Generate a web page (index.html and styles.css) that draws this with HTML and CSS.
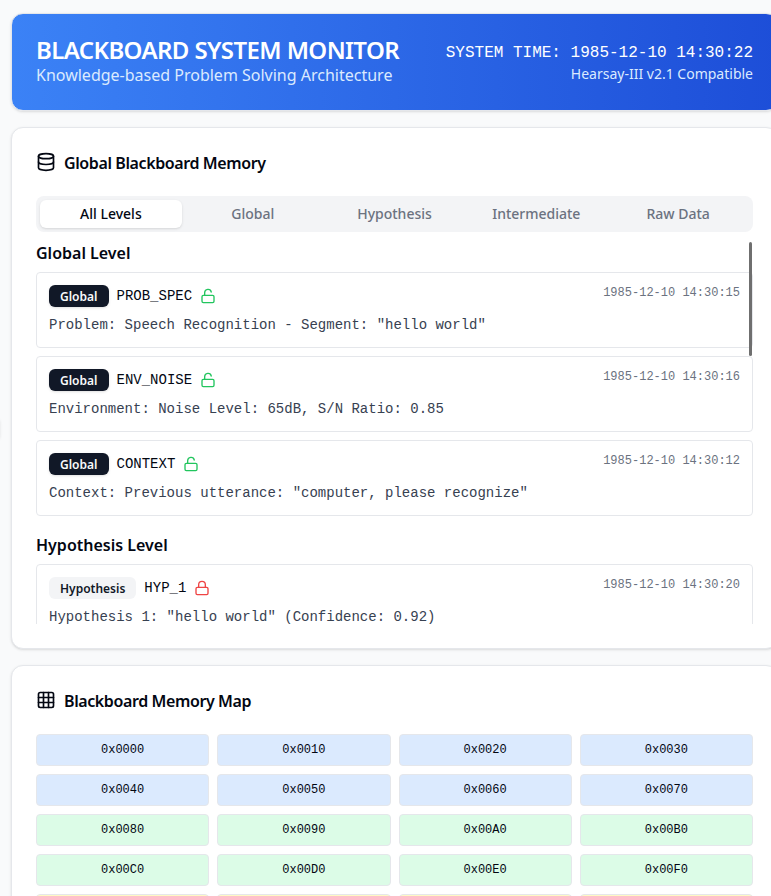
FILE: index.html
```html
<!DOCTYPE html>
<html lang="en">
<head>
<meta charset="utf-8">
<title>Blackboard System Monitor</title>
<link rel="stylesheet" href="styles.css">
</head>
<body>
<svg class="sprite" aria-hidden="true">
  <symbol id="unlock" viewBox="0 0 24 24"><rect width="18" height="11" x="3" y="11" rx="2" ry="2"/><path d="M7 11V7a5 5 0 0 1 9.9-1"/></symbol>
  <symbol id="lock" viewBox="0 0 24 24"><rect width="18" height="11" x="3" y="11" rx="2" ry="2"/><path d="M7 11V7a5 5 0 0 1 10 0v4"/></symbol>
</svg>
<div class="edge-handle"></div>
<div class="page">
  <header class="card banner">
    <div>
      <h1>BLACKBOARD SYSTEM MONITOR</h1>
      <p class="subtitle">Knowledge-based Problem Solving Architecture</p>
    </div>
    <div class="clock">
      <div class="time">SYSTEM TIME: 1985-12-10 14:30:22</div>
      <div class="version">Hearsay-III v2.1 Compatible</div>
    </div>
  </header>

  <section class="card">
    <h2 class="card-title">
      <svg class="icon" viewBox="0 0 24 24"><ellipse cx="12" cy="5" rx="9" ry="3"/><path d="M3 5V19A9 3 0 0 0 21 19V5"/><path d="M3 12A9 3 0 0 0 21 12"/></svg>
      <span>Global Blackboard Memory</span>
    </h2>
    <div class="tabs">
      <div class="tab active">All Levels</div>
      <div class="tab">Global</div>
      <div class="tab">Hypothesis</div>
      <div class="tab">Intermediate</div>
      <div class="tab">Raw Data</div>
    </div>
    <div class="scroll">
      <div class="scroll-thumb"></div>
      <div class="level">
        <h3>Global Level</h3>
        <div class="entry">
          <div class="row"><div class="key"><span class="badge dark">Global</span><span class="name">PROB_SPEC</span><svg class="lock open"><use href="#unlock"/></svg></div><span class="stamp">1985-12-10 14:30:15</span></div>
          <div class="text">Problem: Speech Recognition - Segment: "hello world"</div>
        </div>
        <div class="entry">
          <div class="row"><div class="key"><span class="badge dark">Global</span><span class="name">ENV_NOISE</span><svg class="lock open"><use href="#unlock"/></svg></div><span class="stamp">1985-12-10 14:30:16</span></div>
          <div class="text">Environment: Noise Level: 65dB, S/N Ratio: 0.85</div>
        </div>
        <div class="entry">
          <div class="row"><div class="key"><span class="badge dark">Global</span><span class="name">CONTEXT</span><svg class="lock open"><use href="#unlock"/></svg></div><span class="stamp">1985-12-10 14:30:12</span></div>
          <div class="text">Context: Previous utterance: "computer, please recognize"</div>
        </div>
      </div>
      <div class="level">
        <h3>Hypothesis Level</h3>
        <div class="entry">
          <div class="row"><div class="key"><span class="badge">Hypothesis</span><span class="name">HYP_1</span><svg class="lock closed"><use href="#lock"/></svg></div><span class="stamp">1985-12-10 14:30:20</span></div>
          <div class="text">Hypothesis 1: "hello world" (Confidence: 0.92)</div>
        </div>
      </div>
    </div>
  </section>

  <section class="card">
    <h2 class="card-title">
      <svg class="icon" viewBox="0 0 24 24"><rect width="18" height="18" x="3" y="3" rx="2"/><path d="M3 9h18"/><path d="M3 15h18"/><path d="M9 3v18"/><path d="M15 3v18"/></svg>
      <span>Blackboard Memory Map</span>
    </h2>
    <div class="map">
      <div class="cell blue">0x0000</div><div class="cell blue">0x0010</div><div class="cell blue">0x0020</div><div class="cell blue">0x0030</div>
      <div class="cell blue">0x0040</div><div class="cell blue">0x0050</div><div class="cell blue">0x0060</div><div class="cell blue">0x0070</div>
      <div class="cell green">0x0080</div><div class="cell green">0x0090</div><div class="cell green">0x00A0</div><div class="cell green">0x00B0</div>
      <div class="cell green">0x00C0</div><div class="cell green">0x00D0</div><div class="cell green">0x00E0</div><div class="cell green">0x00F0</div>
      <div class="cell yellow"></div><div class="cell yellow"></div><div class="cell yellow"></div><div class="cell yellow"></div>
    </div>
  </section>
</div>
</body>
</html>
```
FILE: styles.css
```css
* { box-sizing: border-box; margin: 0; padding: 0; }
html, body { height: 100%; overflow: hidden; }
body {
  background: #f9fafb;
  color: #030712;
  font-family: "Noto Sans", sans-serif;
  font-size: 16px;
  line-height: 24px;
}
.sprite { display: none; }
.edge-handle {
  position: absolute;
  left: -10px;
  top: 419px;
  width: 10px;
  height: 21px;
  border-radius: 4px;
  box-shadow: 0 0 3px rgba(0,0,0,.1);
}
.page {
  width: 767px;
  height: 883px;
  overflow: hidden;
  margin-top: 8px;
  padding: 5px 0 0 11px;
  box-sizing: content-box;
  height: 883px;
  display: flex;
  flex-direction: column;
  gap: 16px;
}
.card {
  flex: none;
  background: #fff;
  border: 1px solid #e5e7eb;
  border-radius: 12px;
  padding: 24px;
  box-shadow: 0 1px 3px rgba(0,0,0,.1), 0 1px 2px -1px rgba(0,0,0,.1);
}
.banner {
  height: 98px;
  display: flex;
  justify-content: space-between;
  align-items: center;
  background: linear-gradient(to right, #3b82f6, #1d4ed8);
  color: #fff;
}
h1 { font-size: 24px; line-height: 24px; font-weight: 600; letter-spacing: -0.6px; }
.subtitle { padding-top: 1px; margin-bottom: -1px; color: #dbeafe; }
.clock { text-align: right; }
.time, .name, .text, .stamp, .cell { font-family: "Liberation Mono", monospace; }
.time { padding-top: 1px; margin-bottom: -1px; }
.version { font-size: 14px; line-height: 20px; color: #dbeafe; }
.card-title {
  display: flex;
  gap: 8px;
  height: 20px;
  margin-bottom: 24px;
  font-size: 16px;
  line-height: 20px;
  font-weight: 600;
  letter-spacing: -0.4px;
}
.card-title span { padding-top: 1px; }
svg { fill: none; stroke: currentColor; stroke-width: 2; stroke-linecap: round; stroke-linejoin: round; }
.icon { width: 20px; height: 20px; flex: none; }
.tabs {
  display: grid;
  grid-template-columns: repeat(5, 1fr);
  height: 36px;
  padding: 4px;
  border-radius: 8px;
  background: #f3f4f6;
  color: #6b7280;
  font-size: 14px;
  line-height: 28px;
  font-weight: 500;
  text-align: center;
}
.tab.active { background: #fff; color: #030712; border-radius: 6px; box-shadow: 0 1px 3px rgba(0,0,0,.1), 0 1px 2px -1px rgba(0,0,0,.1); }
.scroll { position: relative; height: 384px; margin-top: 8px; overflow: hidden; }
.scroll-thumb { position: absolute; top: 2px; right: 1px; width: 3px; height: 114px; border-radius: 2px; background: #6f6f6f; }
.level { margin-bottom: 16px; }
h3 { font-size: 16px; line-height: 24px; font-weight: 600; padding-top: 1px; margin-bottom: 7px; }
.entry { height: 76px; padding: 12px; margin-bottom: 8px; border: 1px solid #e5e7eb; border-radius: 4px; }
.row { display: flex; justify-content: space-between; align-items: flex-start; }
.key { display: flex; align-items: center; gap: 8px; }
.badge { height: 22px; padding: 3px 10px 1px; border: 1px solid transparent; border-radius: 6px; background: #f3f4f6; color: #111827; font-size: 12px; line-height: 16px; font-weight: 600; }
.badge.dark { width: 60px; margin-right: -0.5px; background: #111827; color: #f9fafb; box-shadow: 0 1px 3px rgba(0,0,0,.1), 0 1px 2px -1px rgba(0,0,0,.1); }
.name { font-size: 14px; line-height: 20px; }
.lock { width: 16px; height: 16px; }
.open { color: #22c55e; }
.closed { color: #ef4444; }
.stamp { font-size: 12px; line-height: 16px; color: #6b7280; }
.text { margin-top: 8px; font-size: 14px; line-height: 20px; color: #374151; }
.map { display: grid; grid-template-columns: repeat(4, 1fr); gap: 8px; }
.cell { height: 32px; border: 1px solid #e5e7eb; border-radius: 4px; text-align: center; font-size: 12px; line-height: 30px; }
.blue { background: #dbeafe; }
.green { background: #dcfce7; }
.yellow { background: #fef9c3; }
```
